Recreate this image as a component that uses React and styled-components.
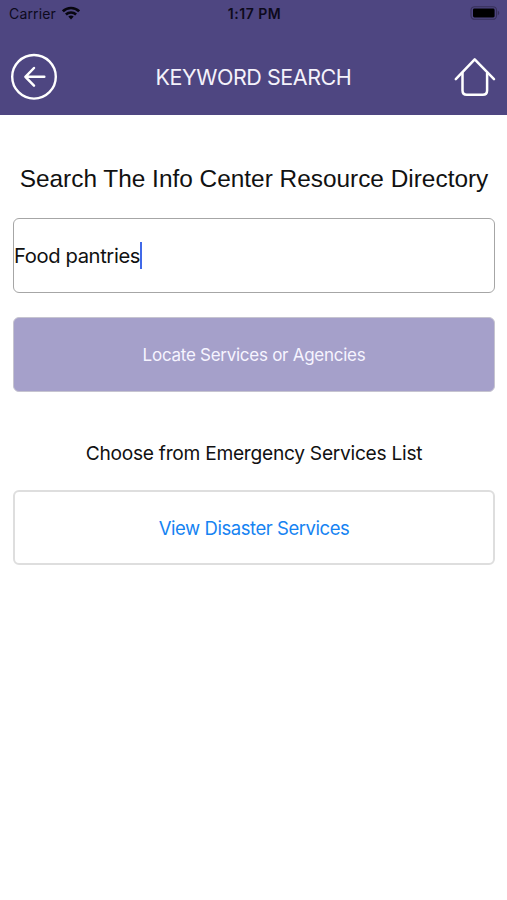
import React from 'react';
import styled, { createGlobalStyle } from 'styled-components';

const GlobalStyle = createGlobalStyle`
    * {
        box-sizing: border-box;
    }
    body {
        margin: 0;
        background-color: #fff;
        font-family: Inter, "Liberation Sans", sans-serif;
    }
`;

const Screen = styled.div`
    width: 507px;
    height: 900px;
    background-color: #fff;
    overflow: hidden;
`;

const Header = styled.header`
    height: 115px;
    background-color: #4e4681;
`;

const StatusBar = styled.div`
    height: 28px;
    padding: 0 7px 0 9px;
    display: grid;
    grid-template-columns: 1fr auto 1fr;
    align-items: center;
    color: #0d0a1c;
    font-size: 14px;
    line-height: 28px;
`;

const Carrier = styled.div`
    display: flex;
    align-items: center;
    gap: 6px;
    height: 26px;
    letter-spacing: 0.15px;
    svg {
        margin-top: -2px;
    }
`;

const Clock = styled.div`
    font-size: 14px;
    font-weight: 600;
    letter-spacing: 0.5px;
`;

const BatteryIcon = styled.svg`
    justify-self: end;
    display: block;
    margin-top: -2px;
`;

const NavBar = styled.div`
    height: 87px;
    padding: 0 11px;
    display: grid;
    grid-template-columns: 48px 1fr 48px;
    align-items: center;
`;

const NavButton = styled.button`
    width: 48px;
    height: 48px;
    margin-top: 11px;
    padding: 0;
    border: none;
    background: none;
    cursor: pointer;
    svg {
        display: block;
    }
`;

const Title = styled.h1`
    margin: 11px 0 0;
    color: #f4f2fb;
    text-align: center;
    font-size: 21.5px;
    font-weight: 400;
    letter-spacing: -0.45px;
    line-height: 28px;
    white-space: nowrap;
`;

const Content = styled.main`
    padding: 0 12px 0 13px;
`;

const Heading = styled.h2`
    margin: 0;
    padding-top: 49px;
    height: 103px;
    color: #111;
    text-align: center;
    font-family: "Liberation Sans", Arial, sans-serif;
    font-size: 24.4px;
    font-weight: 400;
    line-height: 30px;
    white-space: nowrap;
`;

const SearchField = styled.div`
    display: flex;
    align-items: center;
    height: 75px;
    border: 1.5px solid #a6a6a6;
    border-radius: 6px;
    color: #111;
    font-size: 20.2px;
    letter-spacing: -0.38px;
    white-space: nowrap;
`;

const Caret = styled.span`
    width: 2px;
    height: 27px;
    background-color: #4169e8;
`;

const ActionButton = styled.button`
    display: block;
    width: 100%;
    height: 75px;
    padding: 0;
    border: ${props => props.$filled ? '1px solid #c6c4d0' : '2px solid #dedede'};
    border-radius: 6px;
    background-color: ${props => props.$filled ? '#a5a0ca' : '#fff'};
    color: ${props => props.$filled ? '#f6f4ff' : '#1683f2'};
    font-family: inherit;
    font-size: ${props => props.$filled ? '17px' : '18.5px'};
    letter-spacing: ${props => props.$filled ? '-0.27px' : '-0.45px'};
    cursor: pointer;
`;

const FieldRow = styled.div`
    margin-bottom: 24px;
`;

const Label = styled.p`
    margin: 0;
    padding-top: 47px;
    height: 98px;
    color: #111;
    text-align: center;
    font-size: 19.2px;
    letter-spacing: -0.28px;
    line-height: 28px;
    white-space: nowrap;
`;

function WifiIcon() {
    return (
        <svg width="18" height="14" viewBox="0 0 18 14" fill="none" stroke="#08060f" strokeWidth="2.6">
            <path d="M0.9 5.3 C5.4 0.9 12.6 0.9 17.1 5.3"/>
            <path d="M3.9 8.5 C6.8 5.8 11.2 5.8 14.1 8.5"/>
            <path d="M6.3 10.6 C7.8 9.2 10.2 9.2 11.7 10.6 L9 13.5 Z" fill="#08060f" stroke="none"/>
        </svg>
    );
}

function Battery() {
    return (
        <BatteryIcon width="30" height="14" viewBox="0 0 30 14">
            <rect x="1" y="0.7" width="25.5" height="12.6" rx="3.6" fill="none" stroke="#373059" strokeWidth="1.1"/>
            <rect x="3" y="2.6" width="21.6" height="8.8" rx="1.4" fill="#000"/>
            <path d="M27.8 4.8 C29.7 5.5 29.7 8.5 27.8 9.2 Z" fill="#373059"/>
        </BatteryIcon>
    );
}

function BackIcon() {
    return (
        <svg width="48" height="48" viewBox="0 0 48 48" fill="none" stroke="#fff" strokeLinecap="round" strokeLinejoin="round">
            <circle cx="23" cy="23.8" r="21.8" strokeWidth="2.4"/>
            <path d="M33.3 23.8 H14.8 M23 15 L14.4 23.8 L23 32.6" strokeWidth="2.5"/>
        </svg>
    );
}

function HomeIcon() {
    return (
        <svg width="48" height="48" viewBox="0 0 48 48" fill="none" stroke="#fff" strokeWidth="2.5" strokeLinecap="round" strokeLinejoin="round">
            <path d="M7.8 26.2 L26.7 6.4 L46 26.2"/>
            <path d="M14.5 20 V37.5 Q14.5 41.8 18.8 41.8 H34.8 Q39.1 41.8 39.1 37.5 V20"/>
        </svg>
    );
}

class KeywordSearch extends React.Component {
    render() {
        return (
            <Content>
                <Heading>Search The Info Center Resource Directory</Heading>
                <FieldRow>
                    <SearchField>
                        <span>Food pantries</span>
                        <Caret/>
                    </SearchField>
                </FieldRow>
                <ActionButton $filled>Locate Services or Agencies</ActionButton>
                <Label>Choose from Emergency Services List</Label>
                <ActionButton>View Disaster Services</ActionButton>
            </Content>
        );
    }
}

export default function App() {
    return (
        <Screen>
            <GlobalStyle/>
            <Header>
                <StatusBar>
                    <Carrier>
                        <span>Carrier</span>
                        <WifiIcon/>
                    </Carrier>
                    <Clock>1:17 PM</Clock>
                    <Battery/>
                </StatusBar>
                <NavBar>
                    <NavButton aria-label="Back"><BackIcon/></NavButton>
                    <Title>KEYWORD SEARCH</Title>
                    <NavButton aria-label="Home"><HomeIcon/></NavButton>
                </NavBar>
            </Header>
            <KeywordSearch/>
        </Screen>
    );
}
